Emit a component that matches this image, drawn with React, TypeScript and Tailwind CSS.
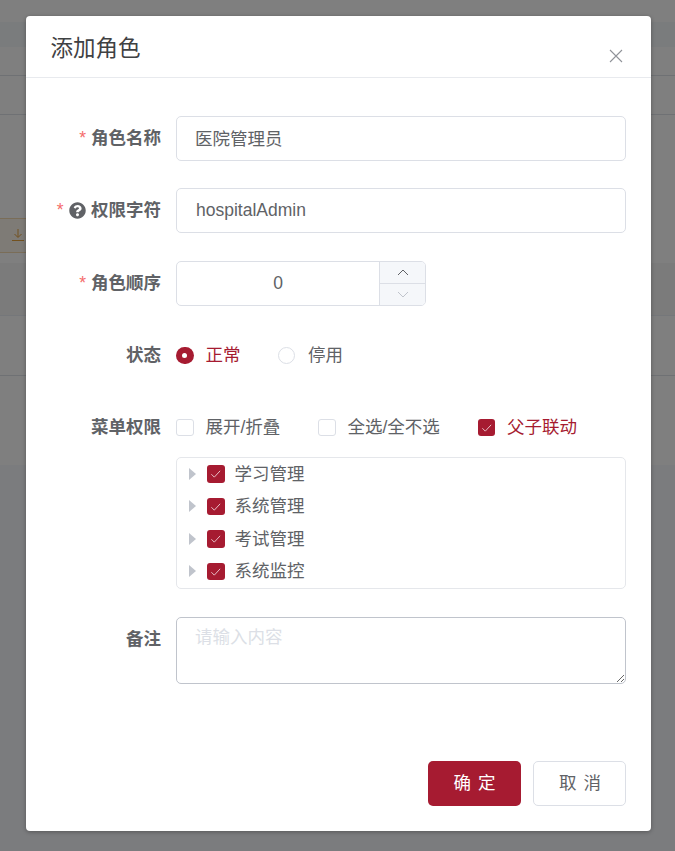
import React from 'react';
import { FaQuestionCircle } from 'react-icons/fa';

const fontStack = "font-['Liberation_Sans','Noto_Sans_CJK_SC',sans-serif]";

function CheckMark() {
  return (
    <svg viewBox="0 0 18 18" className="h-full w-full">
      <path d="M4.5 9.5l3 3L13.5 6" fill="none" stroke="#e9c2c9" strokeWidth="1" />
    </svg>
  );
}

function Checkbox({ checked = false }: { checked?: boolean }) {
  return checked ? (
    <span className="block h-[17.5px] w-[17.5px] shrink-0 rounded-[3px] bg-[#a61b31]">
      <CheckMark />
    </span>
  ) : (
    <span className="block h-[17.5px] w-[17.5px] shrink-0 rounded-[3px] border border-[#dcdfe6] bg-white" />
  );
}

function FormRow({ label, required, help, className, children }: {
  label: string;
  required?: boolean;
  help?: boolean;
  className?: string;
  children: React.ReactNode;
}) {
  return (
    <div className={`flex ${className ?? ''}`}>
      <label className="flex h-[45px] w-[150px] shrink-0 items-center justify-end pr-[15px] font-bold text-[#606266]">
        {required && <span className="mr-[5px] font-normal text-[#f56c6c]">*</span>}
        {help && <FaQuestionCircle className="mr-[5.5px] h-[17px] w-[17px] text-[#606266]" />}
        {label}
      </label>
      <div className="min-w-0 flex-1">{children}</div>
    </div>
  );
}

function TextInput({ value, className }: { value: string; className?: string }) {
  return (
    <input
      readOnly
      value={value}
      className={`block h-[45px] w-full rounded-[5px] border border-[#dcdfe6] bg-white pr-[19px] text-[#606266] outline-none ${className ?? ''}`}
    />
  );
}

const treeNodes = ['学习管理', '系统管理', '考试管理', '系统监控'];

export default function App() {
  return (
    <div className={`relative h-screen overflow-hidden bg-white ${fontStack}`}>
      {/* page behind the dialog */}
      <div className="flex flex-col">
        <div className="h-[22px]" />
        <div className="h-[25px] bg-[#f4f8fb]" />
        <div className="h-[29px] border-b border-[#dfe3e8]" />
        <div className="h-[39px] border-b border-[#dfe3e8]" />
        <div className="h-[103px]" />
        <div className="h-[35px] w-[100px] border-y border-[#f5dab1] bg-[#fdf6ec] pl-[12px] pt-[10px] text-[#e6a23c]">
          <svg viewBox="0 0 12 12" className="h-[12px] w-[12px]">
            <path d="M6 0v8M2.5 5L6 8.5 9.5 5M0 11.5h12" fill="none" stroke="currentColor" strokeWidth="1" />
          </svg>
        </div>
        <div className="h-[10px]" />
        <div className="h-[53px] border-b border-[#ebeef5] bg-[#f7f7f7]" />
        <div className="h-[60px] border-b border-[#dfe3e8]" />
        <div className="h-[89px]" />
        <div className="h-[387px] bg-[#f6f8fc]" />
      </div>
      <div className="absolute inset-0 bg-black/50" />

      {/* dialog */}
      <div className="absolute left-[26px] top-[16px] flex h-[815px] w-[625px] flex-col rounded-[4px] bg-white text-[17.5px] shadow-[0_1px_4px_rgba(0,0,0,0.3)]">
        <div className="relative h-[62px] border-b border-[#e8eaee] pl-[24.5px] pt-[16px] text-[22.5px] leading-[34px] text-[#3f4143]">
          添加角色
          <button className="absolute right-[28px] top-[33px] h-[14px] w-[14px] text-[#909399]">
            <svg viewBox="0 0 14 14" className="h-full w-full">
              <path d="M1 1l12 12M13 1L1 13" fill="none" stroke="currentColor" strokeWidth="1.1" />
            </svg>
          </button>
        </div>

        <div className="flex-1 pr-[25px] pt-[38px]">
          <FormRow label="角色名称" required className="mb-[27px]">
            <TextInput value="医院管理员" className="pb-[2px] pl-[18px]" />
          </FormRow>
          <FormRow label="权限字符" required help className="mb-[28px]">
            <TextInput value="hospitalAdmin" className="pl-[19px]" />
          </FormRow>
          <FormRow label="角色顺序" required className="mb-[27px]">
            <div className="flex h-[45px] w-[250px] overflow-hidden rounded-[5px] border border-[#dcdfe6] text-[#606266]">
              <div className="flex flex-1 items-center justify-center">0</div>
              <div className="flex w-[46px] flex-col border-l border-[#dcdfe6] bg-[#f5f7fa]">
                <div className="flex flex-1 items-center justify-center border-b border-[#dcdfe6]">
                  <svg viewBox="0 0 12 7" className="h-[7px] w-[12px]">
                    <path d="M1 6l5-5 5 5" fill="none" stroke="#606266" strokeWidth="1" />
                  </svg>
                </div>
                <div className="flex flex-1 items-center justify-center">
                  <svg viewBox="0 0 12 7" className="h-[7px] w-[12px]">
                    <path d="M1 1l5 5 5-5" fill="none" stroke="#c0c4cc" strokeWidth="1" />
                  </svg>
                </div>
              </div>
            </div>
          </FormRow>
          <FormRow label="状态" className="mb-[27px]">
            <div className="flex h-[45px] items-center text-[#606266]">
              <span className="flex h-[17.5px] w-[17.5px] items-center justify-center rounded-full bg-[#a61b31]">
                <span className="h-[5px] w-[5px] rounded-full bg-white" />
              </span>
              <span className="ml-[12px] text-[#a61b31]">正常</span>
              <span className="ml-[37px] h-[17.5px] w-[17.5px] rounded-full border border-[#dcdfe6]" />
              <span className="ml-[13px]">停用</span>
            </div>
          </FormRow>
          <FormRow label="菜单权限" className="mb-[28px]">
            <div className="flex h-[45px] items-center text-[#606266]">
              <Checkbox />
              <span className="ml-[12px] w-[112.5px]">展开/折叠</span>
              <Checkbox />
              <span className="ml-[12px] w-[130px]">全选/全不选</span>
              <Checkbox checked />
              <span className="ml-[12px] text-[#a61b31]">父子联动</span>
            </div>
            <div className="mt-[7px] h-[132px] rounded-[5px] border border-[#e5e7eb]">
              {treeNodes.map(name => (
                <div key={name} className="flex h-[32.5px] items-center pl-[12px] text-[#606266] first:-mt-[0.5px]">
                  <span className="h-0 w-0 border-y-[6px] border-l-[7px] border-y-transparent border-l-[#c0c4cc]" />
                  <span className="ml-[11px]"><Checkbox checked /></span>
                  <span className="ml-[10px]">{name}</span>
                </div>
              ))}
            </div>
          </FormRow>
          <FormRow label="备注">
            <textarea
              readOnly
              placeholder="请输入内容"
              className="block h-[67px] w-full rounded-[5px] border border-[#c0c4cc] bg-white px-[18px] py-[6px] text-[#606266] outline-none placeholder:text-[#dcdfe6]"
            />
          </FormRow>
        </div>

        <div className="flex justify-end gap-[12px] pb-[25px] pr-[25px]">
          <button className="h-[45px] w-[93px] rounded-[5px] bg-[#a61b31] text-white [word-spacing:2px]">确 定</button>
          <button className="h-[45px] w-[93px] rounded-[5px] border border-[#dcdfe6] bg-white pl-[1px] text-[#606266] [word-spacing:2px]">取 消</button>
        </div>
      </div>
    </div>
  );
}
